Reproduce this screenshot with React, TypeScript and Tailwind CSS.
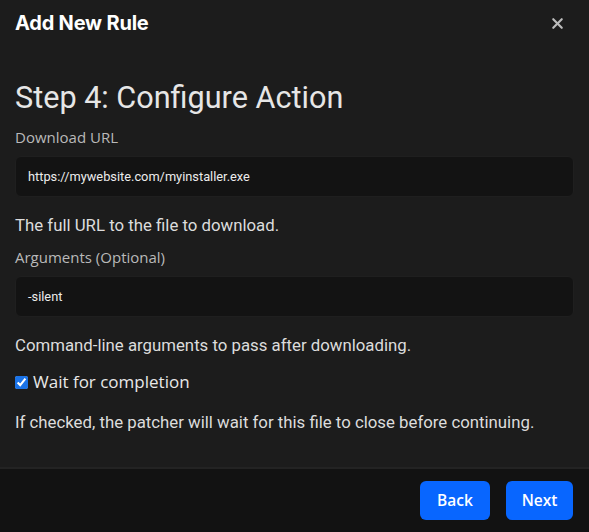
import { X } from 'lucide-react';

const Field = ({ label, value, help }: { label: string; value: string; help: string }) => (
  <div>
    <div className="text-[15px] text-[#b9b9b9] leading-5 mb-[9px] font-['Open_Sans',sans-serif]">{label}</div>
    <div className="h-[41px] rounded-md bg-[#131313] border border-[#1f1f1f] flex items-center px-3 text-[12.8px] text-[#ececec]">
      {value}
    </div>
    <p className="mt-[18px] text-[16.8px] text-[#dcdcdc] leading-5">{help}</p>
  </div>
);

const App = () => {
  return (
    <div className="w-[589px] h-[532px] bg-[#1c1c1c] flex flex-col overflow-hidden font-['Roboto',sans-serif]">
      <div className="h-[46px] flex items-center justify-between pl-[15px] pr-[23px] shrink-0">
        <h2 className="text-[20px] font-bold text-white font-['Inter',sans-serif] tracking-[-0.2px]">Add New Rule</h2>
        <X size={17} strokeWidth={3} className="text-[#bdbdbd]" />
      </div>

      <div className="flex-1 px-[15px] pt-[34px]">
        <h1 className="text-[30.6px] leading-9 text-[#e6e6e6]">Step 4: Configure Action</h1>

        <div className="mt-[11px] flex flex-col gap-[12px]">
          <Field
            label="Download URL"
            value="https://mywebsite.com/myinstaller.exe"
            help="The full URL to the file to download."
          />
          <Field label="Arguments (Optional)" value="-silent" help="Command-line arguments to pass after downloading." />
        </div>

        <label className="mt-[15px] h-6 flex items-center gap-[5px] text-[17px] text-[#e8e8e8] font-['Open_Sans',sans-serif]">
          <input type="checkbox" defaultChecked className="w-[13px] h-[13px] accent-[#1a73e8]" />
          Wait for completion
        </label>

        <p className="mt-[18px] text-[16.8px] text-[#dcdcdc] leading-5">
          If checked, the patcher will wait for this file to close before continuing.
        </p>
      </div>

      <div className="h-[65px] shrink-0 bg-[#121212] border-t-2 border-[#232323] flex items-center justify-end gap-4 px-[16px]">
        <button className="w-[70px] h-[39px] rounded-md bg-[#0866ff] text-white text-[15.5px] font-semibold font-['Open_Sans',sans-serif]">
          Back
        </button>
        <button className="w-[67px] h-[39px] rounded-md bg-[#0866ff] text-white text-[15.5px] font-semibold font-['Open_Sans',sans-serif]">
          Next
        </button>
      </div>
    </div>
  );
};

export default App;
